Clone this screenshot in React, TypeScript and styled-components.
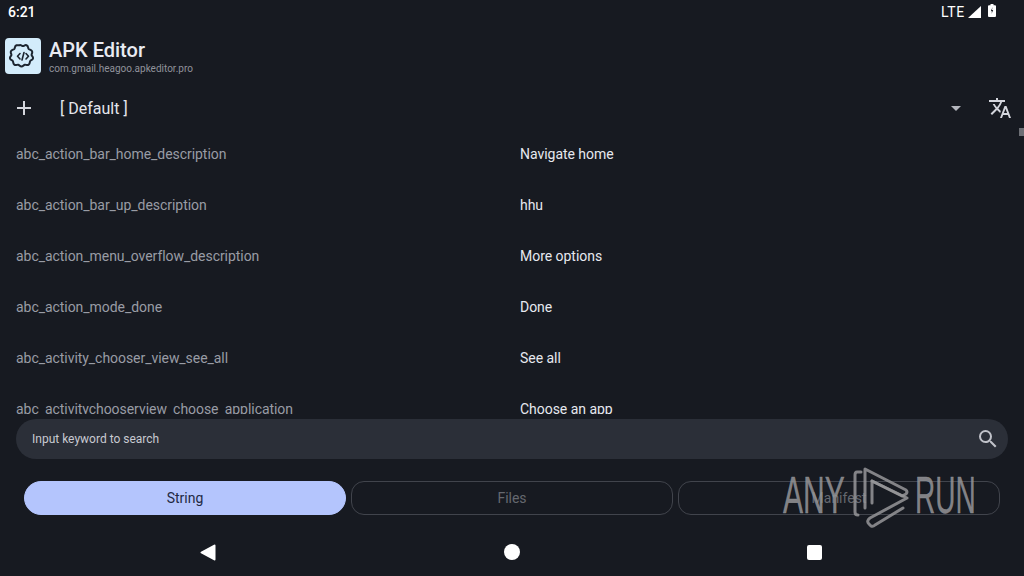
import React from 'react'
import styled, { createGlobalStyle } from 'styled-components'
import { MdAdd, MdSearch, MdTranslate } from 'react-icons/md'

const GlobalStyle = createGlobalStyle`
  html, body {
    margin: 0;
    padding: 0;
    background: #171a21;
  }
  * {
    box-sizing: border-box;
  }
`

const Screen = styled.div`
  position: relative;
  width: 1024px;
  height: 576px;
  overflow: hidden;
  display: flex;
  flex-direction: column;
  background: #171a21;
  font-family: Roboto, "Liberation Sans", sans-serif;
  color: #e6e8ef;
`

const StatusBar = styled.div`
  height: 24px;
  flex: none;
  padding: 0 28px 0 8px;
  display: flex;
  align-items: center;
  justify-content: space-between;
  color: #fff;
  font-size: 14px;
  font-weight: 500;
`

const StatusRight = styled.div`
  display: flex;
  align-items: center;
  font-weight: 400;
  letter-spacing: 0.7px;
`

const SignalIcon = styled.svg`
  margin: 0 7px 0 3px;
`

const BatteryIcon = styled.svg`
  margin-bottom: 3px;
`

const AppHeader = styled.div`
  height: 48px;
  margin-top: 8px;
  flex: none;
  padding-left: 5px;
  display: flex;
  align-items: center;
  gap: 8px;
`

const AppIcon = styled.div`
  width: 36px;
  height: 36px;
  border-radius: 4px;
  background: #d3ecfb;
  display: flex;
  align-items: center;
  justify-content: center;
`

const AppTitles = styled.div`
  display: flex;
  flex-direction: column;
  padding-top: 1px;
`

const AppName = styled.div`
  font-size: 20px;
  line-height: 24px;
  font-weight: 500;
  color: #e9ebf2;
`

const PackageName = styled.div`
  font-size: 10px;
  line-height: 14px;
  color: #8f929b;
`

const ConfigRow = styled.div`
  height: 40px;
  margin-top: 8px;
  flex: none;
  display: flex;
  align-items: center;
  padding: 0 12px;
  color: #d4d6dd;
`

const ConfigName = styled.div`
  flex: 1;
  margin-left: 24px;
  font-size: 16px;
  color: #e4e6ec;
`

const Caret = styled.div`
  width: 0;
  height: 0;
  margin-right: 27px;
  border-left: 5px solid transparent;
  border-right: 5px solid transparent;
  border-top: 5px solid #b4b6bd;
`

const ListArea = styled.div`
  flex: 1;
  overflow: hidden;
`

const Row = styled.div`
  height: 51px;
  display: flex;
  align-items: center;
  padding-left: 16px;
  font-size: 14px;
`

const RowKey = styled.div`
  width: 504px;
  color: #999ca5;
  letter-spacing: -0.05px;
`

const RowValue = styled.div`
  color: #e6e8ef;
  letter-spacing: -0.03px;
`

const Scrollbar = styled.div`
  position: absolute;
  right: 0;
  top: 128px;
  width: 5px;
  height: 8px;
  background: #6d6f75;
`

const SearchBar = styled.div`
  height: 40px;
  margin: 5px 16px 0;
  flex: none;
  border-radius: 20px;
  background: #2b2f38;
  display: flex;
  align-items: center;
  justify-content: space-between;
  padding: 0 8px 0 16px;
  font-size: 12px;
  color: #c8cad1;
`

const Tabs = styled.div`
  margin-top: 22px;
  padding: 0 24px;
  flex: none;
  display: grid;
  grid-template-columns: repeat(3, 322px);
  gap: 5px;
`

const Tab = styled.div<{ $active?: boolean }>`
  height: 34px;
  border-radius: ${(p) => (p.$active ? '17px' : '13px')};
  display: flex;
  align-items: center;
  justify-content: center;
  font-size: 14px;
  background: ${(p) => (p.$active ? '#b4c5fd' : 'transparent')};
  border: 1px solid ${(p) => (p.$active ? '#b4c5fd' : '#41444c')};
  color: ${(p) => (p.$active ? '#1f2a44' : '#65686f')};
`

const NavBar = styled.div`
  height: 48px;
  margin-top: 13px;
  flex: none;
  display: grid;
  grid-template-columns: 416px 192px 412px;
  align-items: center;
  justify-items: center;
`

const NavCircle = styled.div`
  width: 16px;
  height: 16px;
  border-radius: 50%;
  background: #fff;
`

const NavSquare = styled.div`
  width: 15px;
  height: 15px;
  border-radius: 2px;
  background: #fff;
`

const Watermark = styled.div`
  position: absolute;
  left: 783px;
  top: 460px;
  display: flex;
  align-items: center;
  height: 72px;
  pointer-events: none;
`

const WatermarkLogo = styled.svg`
  flex: none;
  margin-right: -5px;
`

const WatermarkText = styled.span<{ $scale: number }>`
  display: inline-block;
  width: 62px;
  font-family: "Liberation Sans", sans-serif;
  font-size: 51px;
  line-height: 72px;
  color: rgba(150, 150, 153, 0.85);
  -webkit-text-stroke: 0.4px rgba(150, 150, 153, 0.85);
  transform-origin: left center;
  transform: scaleX(${(p) => p.$scale});
  white-space: nowrap;
`

const rows = [
  ['abc_action_bar_home_description', 'Navigate home'],
  ['abc_action_bar_up_description', 'hhu'],
  ['abc_action_menu_overflow_description', 'More options'],
  ['abc_action_mode_done', 'Done'],
  ['abc_activity_chooser_view_see_all', 'See all'],
  ['abc_activitychooserview_choose_application', 'Choose an app'],
]

function GearCodeIcon() {
  return (
    <svg width="28" height="28" viewBox="0 0 28 28" fill="none" stroke="#1c2530" strokeWidth="2" strokeLinejoin="round" strokeLinecap="round">
      <path d="M10.500 3.200c1.500-.6 2.300.8 3.500.8s2-1.400 3.500-.8c2 .8 1.300 2.400 2 3.500.7 1 2.500.9 3.400 2.300 1 1.600-.3 2.800-.3 3.900 0 1.100 1.700 1.700 1.400 3.400-.3 1.800-2.100 1.700-2.800 2.700-.7 1 0 2.700-1.500 3.700-1.500 1-2.700-.2-3.900 0-1.100.2-1.700 1.800-3.300 1.800s-2.200-1.600-3.300-1.800c-1.200-.2-2.400 1-3.900 0-1.500-1-.8-2.700-1.500-3.700-.7-1-2.500-.9-2.800-2.700-.3-1.700 1.400-2.300 1.400-3.400 0-1.100-1.300-2.300-.3-3.900.9-1.400 2.700-1.300 3.400-2.300.7-1.100 0-2.700 2-3.500z" />
      <path d="M11 11.500L8.500 14.200 11 17M17 11.500l2.500 2.700L17 17M15 10.500l-2 7.500" strokeWidth="1.600" />
    </svg>
  )
}

function StatusIcons() {
  return (
    <>
      <SignalIcon width="13" height="12" viewBox="0 0 13 12">
        <path d="M13 0v12H0z" fill="#fff" />
      </SignalIcon>
      <BatteryIcon width="8" height="13" viewBox="0 0 8 13">
        <path d="M2.500 0h3v1.200H7a1 1 0 0 1 1 1V12a1 1 0 0 1-1 1H1a1 1 0 0 1-1-1V2.200a1 1 0 0 1 1-1h1.500z" fill="#fff" />
        <path d="M4.500 3L2.800 7.200H4L3.500 10l1.700-4H4z" fill="#171a21" />
      </BatteryIcon>
    </>
  )
}

function BackTriangle() {
  return (
    <svg width="16" height="17" viewBox="0 0 16 17">
      <path d="M15.500 1.500v14a1 1 0 0 1-1.500.8L1 9.300a1 1 0 0 1 0-1.600L14 .7a1 1 0 0 1 1.500.8z" fill="#fff" />
    </svg>
  )
}

function AnyRunMark() {
  return (
    <WatermarkLogo width="75" height="72" viewBox="0 0 75 72" fill="none" stroke="rgba(150,150,153,0.85)" strokeWidth="3" strokeLinejoin="round" strokeLinecap="round">
      <path d="M16 12h-4q-2 0-2 3v37q0 3 3 3" />
      <path d="M20 48V9l41 21q2 2 0 4l-4 2L27 21" />
      <path d="M27 21v22M27 21l35 17-37 20q-4 3-1 6l2 2q2 1 4-1l28-17" />
    </WatermarkLogo>
  )
}

export default function App() {
  return (
    <>
      <GlobalStyle />
      <Screen>
        <StatusBar>
          <span>6:21</span>
          <StatusRight>
            LTE
            <StatusIcons />
          </StatusRight>
        </StatusBar>
        <AppHeader>
          <AppIcon>
            <GearCodeIcon />
          </AppIcon>
          <AppTitles>
            <AppName>APK Editor</AppName>
            <PackageName>com.gmail.heagoo.apkeditor.pro</PackageName>
          </AppTitles>
        </AppHeader>
        <ConfigRow>
          <MdAdd size={24} />
          <ConfigName>[ Default ]</ConfigName>
          <Caret />
          <MdTranslate size={24} />
        </ConfigRow>
        <ListArea>
          {rows.map(([key, value]) => (
            <Row key={key}>
              <RowKey>{key}</RowKey>
              <RowValue>{value}</RowValue>
            </Row>
          ))}
        </ListArea>
        <SearchBar>
          Input keyword to search
          <MdSearch size={24} color="#c0c2c9" />
        </SearchBar>
        <Tabs>
          <Tab $active>String</Tab>
          <Tab>Files</Tab>
          <Tab>Manifest</Tab>
        </Tabs>
        <NavBar>
          <BackTriangle />
          <NavCircle />
          <NavSquare />
        </NavBar>
        <Scrollbar />
        <Watermark>
          <WatermarkText $scale={0.59}>ANY</WatermarkText>
          <AnyRunMark />
          <WatermarkText $scale={0.55}>RUN</WatermarkText>
        </Watermark>
      </Screen>
    </>
  )
}
